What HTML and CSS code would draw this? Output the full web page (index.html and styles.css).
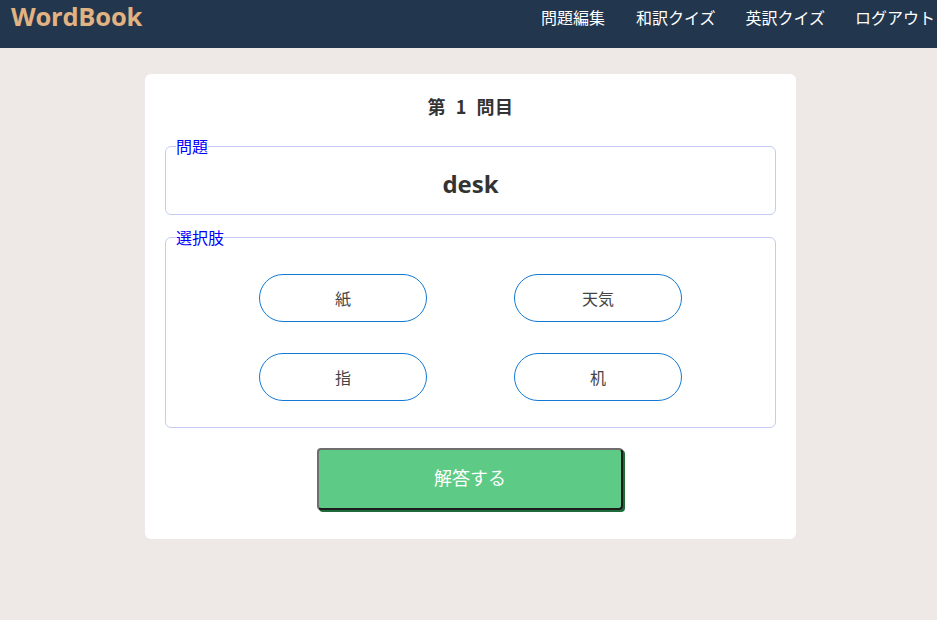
FILE: index.html
```html
<!DOCTYPE html>
<html lang="ja">
<head>
<meta charset="utf-8">
<title>WordBook</title>
<link rel="stylesheet" href="styles.css">
</head>
<body>
<header class="header">
  <div class="logo">WordBook</div>
  <nav class="nav">
    <a class="nav-item">問題編集</a>
    <a class="nav-item">和訳クイズ</a>
    <a class="nav-item">英訳クイズ</a>
    <a class="nav-item">ログアウト</a>
  </nav>
</header>
<main class="main">
  <section class="card">
    <h2 class="title">第 1 問目</h2>
    <fieldset class="box question-box">
      <legend class="legend">問題</legend>
      <div class="word">desk</div>
    </fieldset>
    <fieldset class="box choices-box">
      <legend class="legend">選択肢</legend>
      <div class="choices">
        <button class="choice">紙</button>
        <button class="choice">天気</button>
        <button class="choice">指</button>
        <button class="choice">机</button>
      </div>
    </fieldset>
    <div class="submit-row">
      <button class="submit">解答する</button>
    </div>
  </section>
</main>
</body>
</html>
```
FILE: styles.css
```css
* { box-sizing: border-box; }
html, body { margin: 0; padding: 0; }
body {
  background: #eee8e7;
  font-family: "Noto Sans CJK JP", "Noto Sans", sans-serif;
  color: #333;
  width: 937px;
  height: 620px;
  overflow: hidden;
}
.header {
  height: 48px;
  background: #22364d;
  display: flex;
  justify-content: space-between;
  align-items: flex-start;
  padding-left: 11px;
}
.logo {
  font-family: "Open Sans", "DejaVu Sans", sans-serif;
  font-weight: 700;
  font-size: 25.5px;
  line-height: 33px;
  color: #e2b382;
  letter-spacing: -0.2px;
}
.nav {
  display: flex;
  gap: 30px;
  padding-top: 5px;
  margin-right: 2px;
}
.nav-item {
  color: #fff;
  font-size: 16px;
  line-height: 24px;
  white-space: nowrap;
}
.nav-item:first-child { margin-right: 1px; }
.main {
  padding: 26px 0 0 4px;
}
.card {
  width: 651px;
  margin: 0 auto;
  background: #fff;
  border-radius: 6px;
  padding: 18px 20px 29px;
}
.title {
  margin: 0 0 18px;
  text-align: center;
  font-size: 18px;
  line-height: 28px;
  font-weight: 700;
  color: #333;
  word-spacing: 5px;
  letter-spacing: 0.5px;
}
.box {
  margin: 0;
  border: 1px solid #c5cbf4;
  border-radius: 6px;
  padding: 0;
  min-width: 0;
}
.legend {
  color: #0000ff;
  font-size: 16px;
  line-height: 16px;
  padding: 0;
  margin-left: 10px;
}
.question-box {
  height: 77px;
}
.word {
  text-align: center;
  font-family: "Open Sans", "Noto Sans", sans-serif;
  font-weight: 700;
  font-size: 24px;
  line-height: 30px;
  color: #333;
  padding-top: 15px;
}
.choices-box {
  margin-top: 14px;
  height: 199px;
}
.choices {
  display: grid;
  grid-template-columns: 255px 255px;
  justify-content: center;
  row-gap: 31px;
  justify-items: center;
  padding-top: 29px;
}
.choice {
  width: 168px;
  height: 48px;
  border: 1px solid #1479d4;
  border-radius: 24px;
  background: #fff;
  font-family: "Noto Sans CJK JP", sans-serif;
  font-size: 16px;
  color: #444;
  padding: 0;
}
.submit-row {
  display: flex;
  justify-content: center;
  margin-top: 20px;
}
.submit {
  width: 306px;
  height: 62px;
  background: #5dca86;
  border: 2px solid #6e6e6e;
  border-right-color: #1c1c1c;
  border-bottom-color: #1c1c1c;
  border-radius: 4px;
  box-shadow: 2px 2px 0 #1f6b3c;
  color: #fff;
  font-family: "Noto Sans CJK JP", sans-serif;
  font-size: 18px;
  padding: 0 0 5px;
  margin-left: -1px;
}
```
